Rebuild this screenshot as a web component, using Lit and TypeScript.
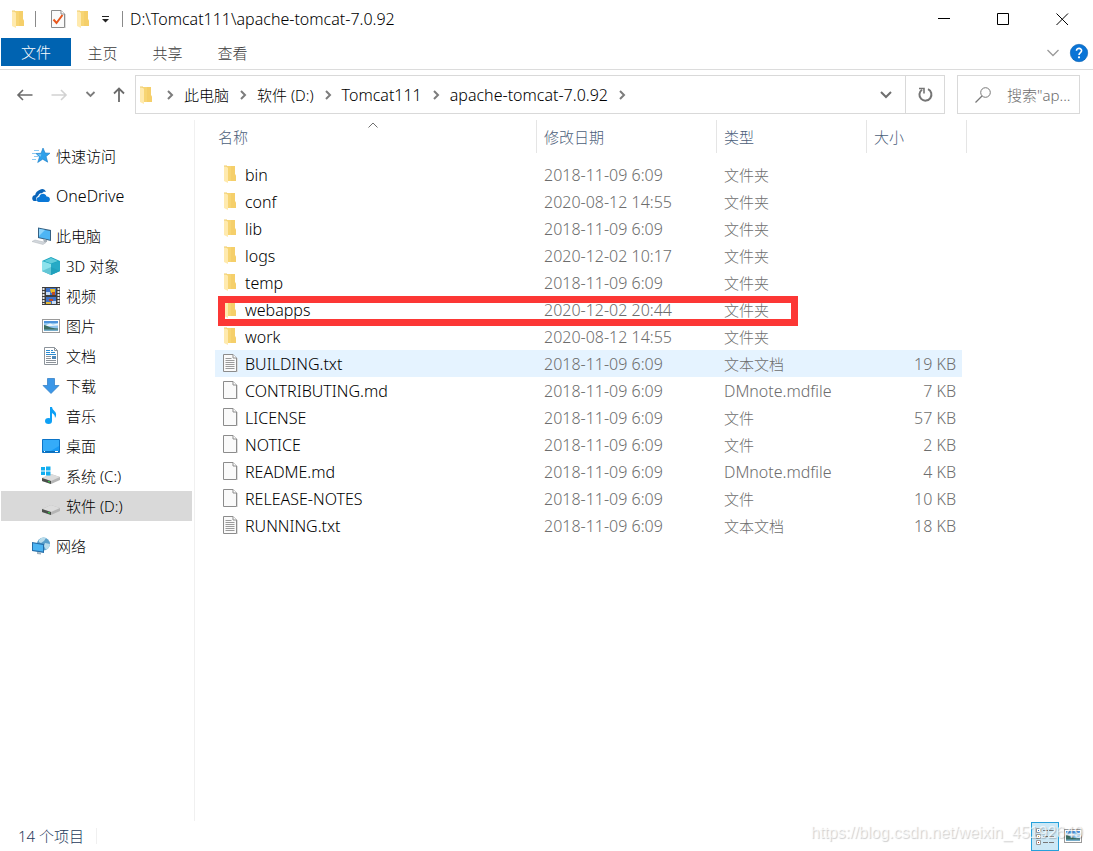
import { LitElement, html, css, svg, nothing } from "lit";
import { customElement, state } from "lit/decorators.js";
import { classMap } from "lit/directives/class-map.js";

const folderShape = svg`
  <path d="M4 1h9v8l1 2v5H4z" fill="#f7d574"/>
  <path d="M9 1h4v8l1 2v5H9z" fill="#f4cc64" opacity=".6"/>
  <path d="M2 1h2l2 2v15l-4-2z" fill="#ffeaae"/>
  <path d="M2 1h3" stroke="#eecb6c"/>`;

const pageShape = svg`
  <path d="M1.500 .5H11l3.500 3.500v13.500h-13z" fill="#fafafa" stroke="#8c8c8c"/>
  <path d="M15.500 4v14" stroke="#dedede"/>
  <path d="M11 .5V4h3.500" fill="#fff" stroke="#8c8c8c"/>`;

const pictureShape = svg`
  <rect x=".5" y="2.500" width="17" height="13" fill="#fff" stroke="#9a9a9a"/>
  <path d="M2 4h14v10H2z" fill="#8fc5ef"/>
  <path d="M2 4h14v2H2z" fill="#4d94dc"/>
  <path d="M4 8l4-1.500 3 1 5-1v2l-14 1z" fill="#e9f5fc"/>
  <path d="M2 8c3 0 4 3 14 3.500V14H2z" fill="#3d6f63"/>
  <path d="M2 12.500h14V14H2z" fill="#78aecb"/>`;

const driveShape = svg`
  <path d="M0 12l9-4 9 3v3l-9 4-9-3z" fill="#b5b5b5"/>
  <path d="M0 12l9-4 9 3-9 4z" fill="#dcdcdc"/>
  <path d="M0 12l9 3v3l-9-3z" fill="#4b4f4b"/>
  <path d="M6 15l2 .6v1l-2-.6z" fill="#31d843"/>`;

const icons: Record<string, unknown> = {
  folder: folderShape,
  page: pageShape,
  text: svg`${pageShape}<path d="M3.500 4.500h6M3.500 6.500h9M3.500 8.500h9M3.500 10.500h9M3.500 12.500h9M3.500 14.500h9" stroke="#9b9b9b"/>`,
  properties: svg`${pageShape}<path d="M3.500 9.500l3 3.500 6-8" fill="none" stroke="#e8571d" stroke-width="2"/>`,
  star: svg`
    <path d="M11 1l2.200 5 4.800.2-3.900 3.300 1.600 5.700-5-3-5 3.300 1.800-5.600L4 6.500l5-.2z" fill="#2ea0ea" stroke="#167bc6" stroke-width=".6"/>
    <path d="M11 2.500L9.500 7 5.500 7.200l3 2.500z" fill="#79c8f8"/>
    <path d="M2 3.500h5M0 6.500h4M2 9.500h4M0 12.500h4" stroke="#8cc9f2"/>`,
  cloud: svg`
    <path d="M1 13.500C-.8 11 1 8 3.200 8 3.500 4.500 7 2.500 10 4l1.500 1.500C7 5.500 6.500 8 6.200 9 3.500 10 4 13 5 14H3c-1 0-1.500 0-2-.5z" fill="#0a64b8"/>
    <path d="M8 2.800c2-1.500 5-.8 6 2.200-2-.5-3.500 0-4.500 1.500C8 6 6.500 6.500 6 8 5 5.500 6 3.500 8 2.800z" fill="#0a64b8"/>
    <path d="M7 15c-3.500-.5-3-5 .2-5C8 6 13.500 5.500 14.500 9.500c4-.3 4.500 5 1.500 5.500z" fill="#0a78d7"/>`,
  computer: svg`
    <path d="M6 .5l13 2.500v11L6 11z" fill="#356083"/>
    <path d="M7 1.700l11 2.200v8.800L7 10.200z" fill="#4db5f5"/>
    <path d="M7 1.700l6 1.200L7 9z" fill="#8ed4fb"/>
    <path d="M11 12l4 1v2l-3 .5z" fill="#a7b0b8"/>
    <path d="M0 14.500l3-1.500 11 2.500-3 2z" fill="#d2d7dc" stroke="#aeb5ba" stroke-width=".5"/>`,
  cube: svg`
    <path d="M0 4l9-4 9 4v10l-9 4-9-4z" fill="#19a3bd"/>
    <path d="M0 4l9 3v11l-9-4z" fill="#8de2ec"/>
    <path d="M9 7l9-3v10l-9 4z" fill="#26aac6"/>
    <path d="M2 4l7-3 7 3-7 2.500z" fill="#62cddc"/>
    <path d="M0 14l9-4 9 4-9 4z" fill="#1693ad" opacity=".35"/>`,
  film: svg`
    <path d="M0 0h18v18H0z" fill="#3d3d3d"/>
    <path d="M1.500 1v16M16.500 1v16" stroke="#e8e8e8" stroke-width="2" stroke-dasharray="2 1"/>
    <path d="M4 1h10v7H4zM4 10h10v7H4z" fill="#3f73c8"/>
    <path d="M4 5h4v3H4zM10 14h4v3h-4z" fill="#c9ddf5"/>
    <path d="M8 2h5v4H9z" fill="#e7bc27"/>
    <path d="M10 5h3v3h-3zM7 12h4v2H7z" fill="#be4b25"/>
    <path d="M4 15h5v2H4z" fill="#e2b736"/>`,
  picture: pictureShape,
  document: svg`
    <path d="M2.500 .5h10l3 3v14h-13z" fill="#fff" stroke="#8d949b"/>
    <path d="M12.500 .5v3h3" fill="none" stroke="#8d949b"/>
    <path d="M4 3.500h4M4 5.500h4M9 3.500h2M9 5.500h4M4 7.500h10" stroke="#2d8bd0"/>
    <path d="M4 9.500h5M4 11.500h5M4 13.500h10M4 15.500h10" stroke="#8c9299"/>
    <path d="M10 9h4v3h-4z" fill="#4e88b8"/>`,
  download: svg`<path d="M5.500 1.500h7v7h4.500l-8 8-8-8h4.500z" fill="#3b97e8" stroke="#2a79c2" stroke-width=".7"/>`,
  music: svg`
    <path d="M8 0h2c.5 4 5 4 4 9l-1 2c0-4-2-4-3-5v8H8z" fill="#0ea0f5"/>
    <ellipse cx="6.500" cy="14" rx="3.500" ry="3" fill="#0ea0f5"/>`,
  desktop: svg`
    <path d="M.5 2.500h17v13H.5z" fill="#199bf5" stroke="#0c74c7"/>
    <path d="M17 3v6L7 15H1V3z" fill="#41b3fb" opacity=".7"/>
    <path d="M1 14.500h16" stroke="#0b6fb8"/>
    <path d="M2 14.500h1M13 14.500h3" stroke="#fff"/>`,
  system: svg`
    <g transform="translate(0 -1)">${driveShape}</g>
    <path d="M-1 0h4v3.500h-4zM4 -.5h4.500v4H4zM-1 4.500h4V8h-4zM4 4.500h4.500v4H4z" fill="#12aef0"/>`,
  drive: driveShape,
  network: svg`
    <circle cx="11.500" cy="7" r="6.500" fill="#5a9fca"/>
    <path d="M7 3c2-2.500 5-3 7-2l-2 3-3 2-2-1zM13 6l5 1c0 3-2 5-4 6l-2-4z" fill="#b9dceb"/>
    <path d="M0 5l12 2v9L0 14z" fill="#256ea9"/>
    <path d="M1 6.200l10 1.700v6.700L1 13z" fill="#4cb4f2"/>
    <path d="M5 15l4 .6v2l-4-.6z" fill="#9fb2bf"/>`,
};

const icon = (name: string) =>
  html`<svg class="icon" width="18" height="18" viewBox="0 0 18 18" aria-hidden="true">${icons[name]}</svg>`;

const chevronRight = html`<svg class="sep" width="8" height="10" viewBox="0 0 8 10" aria-hidden="true">
  <path d="M2 1l4 4-4 4" fill="none" stroke="#7c7c7c" stroke-width="2" />
</svg>`;

const isLatin = (text: string) => /^[\x20-\x7e]+$/.test(text);

interface Place { label: string; icon: string; level: number; }
interface Entry { name: string; icon: string; date: string; type: string; size: string; }

const crumbs = ["此电脑", "软件 (D:)", "Tomcat111", "apache-tomcat-7.0.92"];

const groups: Place[][] = [
  [{ label: "快速访问", icon: "star", level: 0 }],
  [{ label: "OneDrive", icon: "cloud", level: 0 }],
  [
    { label: "此电脑", icon: "computer", level: 0 },
    { label: "3D 对象", icon: "cube", level: 1 },
    { label: "视频", icon: "film", level: 1 },
    { label: "图片", icon: "picture", level: 1 },
    { label: "文档", icon: "document", level: 1 },
    { label: "下载", icon: "download", level: 1 },
    { label: "音乐", icon: "music", level: 1 },
    { label: "桌面", icon: "desktop", level: 1 },
    { label: "系统 (C:)", icon: "system", level: 1 },
    { label: "软件 (D:)", icon: "drive", level: 1 },
  ],
  [{ label: "网络", icon: "network", level: 0 }],
];

const entry = (name: string, iconName: string, date: string, type: string, size = ""): Entry =>
  ({ name, icon: iconName, date, type, size });

const entries: Entry[] = [
  entry("bin", "folder", "2018-11-09 6:09", "文件夹"),
  entry("conf", "folder", "2020-08-12 14:55", "文件夹"),
  entry("lib", "folder", "2018-11-09 6:09", "文件夹"),
  entry("logs", "folder", "2020-12-02 10:17", "文件夹"),
  entry("temp", "folder", "2018-11-09 6:09", "文件夹"),
  entry("webapps", "folder", "2020-12-02 20:44", "文件夹"),
  entry("work", "folder", "2020-08-12 14:55", "文件夹"),
  entry("BUILDING.txt", "text", "2018-11-09 6:09", "文本文档", "19 KB"),
  entry("CONTRIBUTING.md", "page", "2018-11-09 6:09", "DMnote.mdfile", "7 KB"),
  entry("LICENSE", "page", "2018-11-09 6:09", "文件", "57 KB"),
  entry("NOTICE", "page", "2018-11-09 6:09", "文件", "2 KB"),
  entry("README.md", "page", "2018-11-09 6:09", "DMnote.mdfile", "4 KB"),
  entry("RELEASE-NOTES", "page", "2018-11-09 6:09", "文件", "10 KB"),
  entry("RUNNING.txt", "text", "2018-11-09 6:09", "文本文档", "18 KB"),
];

@customElement("app-root")
export class AppRoot extends LitElement {
  @state() private place = "软件 (D:)";
  @state() private active = "BUILDING.txt";

  static styles = css`
    :host {
      display: flex;
      flex-direction: column;
      position: relative;
      min-height: 100vh;
      box-sizing: border-box;
      background: #fff;
      color: #000;
      font: 300 15px/20px "Noto Sans", "Noto Sans CJK SC", sans-serif;
    }
    *, *::before, *::after { box-sizing: border-box; }
    button, input {
      font: inherit;
      color: inherit;
      background: none;
      border: 0;
      padding: 0;
      margin: 0;
    }
    svg { display: block; flex: none; overflow: visible; }
    .latin { font-size: 16px; }

    .titlebar { display: flex; align-items: center; height: 38px; padding-left: 10px; }
    .quick { display: flex; align-items: center; }
    .rule { width: 1px; height: 16px; background: #8a8a8a; }
    .quick .first-rule { margin: 0 14px 0 7px; }
    .quick .more { padding: 0 12px 0 9px; }
    .quick .gap { margin-left: 7px; }
    .title { flex: 1; margin: 0; padding-left: 7px; font-weight: 300; }
    .caption { display: flex; padding-right: 1px; }
    .caption button { width: 59px; height: 38px; display: grid; place-items: center; }

    .ribbon { display: flex; align-items: center; height: 32px; padding: 0 0 2px 1px; border-bottom: 1px solid #dcdcdc; color: #3b3b3b; }
    .tab { width: 65px; height: 28px; padding: 1px 2px 0 0; align-self: flex-start; }
    .tab.file { width: 70px; padding: 0; background: #0063b1; color: #fff; }
    .ribbon .spacer { flex: 1; }
    .ribbon .help { margin: 0 5px 0 11px; }

    .nav { display: flex; align-items: center; gap: 10px; padding: 5px 13px 6px 17px; }
    .arrows { display: flex; align-items: center; width: 108px; justify-content: space-between; }
    .address { flex: 1; display: flex; align-items: center; height: 39px; margin-right: 2px; border: 1px solid #d9d9d9; min-width: 0; }
    .crumbs { flex: 1; display: flex; align-items: center; padding-left: 2px; min-width: 0; }
    .crumbs .sep { margin: 0 10px; }
    .reload { width: 39px; height: 37px; border-left: 1px solid #d9d9d9; display: grid; place-items: center; }
    .drop { width: 38px; height: 37px; display: grid; place-items: center; }
    .search { display: flex; align-items: center; gap: 16px; width: 123px; height: 39px; padding-left: 17px; border: 1px solid #d9d9d9; color: #6d6d6d; }
    .search input { width: 72px; min-width: 0; outline: 0; }
    .search input::placeholder { color: #6d6d6d; opacity: 1; }

    .body { display: flex; flex: 1; }
    .side { width: 195px; padding: 21px 2px 0 1px; border-right: 1px solid #f0f0f0; display: flex; flex-direction: column; gap: 10px; }
    .group { display: flex; flex-direction: column; }
    .place { display: flex; align-items: center; gap: 6px; height: 30px; padding-left: 31px; text-align: left; }
    .place.child { padding-left: 41px; }
    .place.on { background: #d9d9d9; }

    .files { flex: 1; padding-left: 20px; }
    table { border-collapse: separate; border-spacing: 0; table-layout: fixed; width: 752px; }
    .c-name { width: 322px; }
    .c-date { width: 180px; }
    .c-type { width: 150px; }
    .c-size { width: 95px; }
    .c-end { width: 5px; }
    th { position: relative; height: 33px; padding: 1px 0 0 7px; text-align: left; font-weight: 300; color: #4c607a; border-right: 1px solid #e5e5e5; }
    th:first-child { padding-left: 3px; }
    .sort { position: absolute; inset: 2px 6px auto 0; display: flex; justify-content: center; }
    .space td { height: 8px; }
    td { height: 27px; padding: 0 0 0 7px; color: #6d6d6d; white-space: nowrap; }
    td.name { position: relative; color: #000; }
    td.size { padding: 0 6px 0 0; text-align: right; }
    td.end { padding: 0; }
    .label { display: flex; align-items: center; gap: 5px; }
    .label .icon { margin-bottom: 2px; }
    tr.on td:not(.end) { background: #e5f3ff; }
    .mark { position: absolute; left: 3px; top: 0; width: 580px; height: 30px; border: 7px solid #fc3735; z-index: 1; pointer-events: none; }

    .status { display: flex; align-items: center; height: 30px; padding: 0 11px 0 18px; color: #1e395b; }
    .status .count { padding-right: 12px; border-right: 1px solid #f0f0f0; line-height: 16px; }
    .views { display: flex; align-items: center; gap: 5px; margin-left: auto; }
    .views button { display: grid; place-items: center; }
    .views .details { width: 28px; height: 29px; background: #cce8f6; border: 1px solid #26a0da; }
    .watermark { position: absolute; right: 10px; bottom: 8px; font: 16px/20px "Liberation Sans", sans-serif; color: rgba(255, 255, 255, 0.7); text-shadow: 1px 1px 1px rgba(0, 0, 0, 0.2); pointer-events: none; }
  `;

  private renderTitle() {
    return html`<header class="titlebar">
      <div class="quick">
        ${icon("folder")}
        <span class="rule first-rule"></span>
        ${icon("properties")}
        <span class="gap">${icon("folder")}</span>
        <button class="more" aria-label="自定义快速访问工具栏">
          <svg width="8" height="7" viewBox="0 0 8 7"><path d="M0 .5h7" stroke="#222" /><path d="M0 3h7L3.500 6.500z" fill="#222" /></svg>
        </button>
        <span class="rule"></span>
      </div>
      <h1 class="title latin">D:\\Tomcat111\\apache-tomcat-7.0.92</h1>
      <div class="caption">
        <button aria-label="最小化"><svg width="13" height="13" viewBox="0 0 13 13"><path d="M0 5.500h12" stroke="#000" /></svg></button>
        <button aria-label="最大化"><svg width="13" height="13" viewBox="0 0 13 13"><path d="M.5 .5h11v11H.5z" fill="none" stroke="#000" /></svg></button>
        <button aria-label="关闭"><svg width="13" height="13" viewBox="0 0 13 13"><path d="M.5 .5l11.500 11.500M12 .5L.5 12" stroke="#000" /></svg></button>
      </div>
    </header>`;
  }

  private renderRibbon() {
    return html`<div class="ribbon">
      <button class="tab file">文件</button>
      ${["主页", "共享", "查看"].map((t) => html`<button class="tab">${t}</button>`)}
      <span class="spacer"></span>
      <button aria-label="展开功能区"><svg width="12" height="8" viewBox="0 0 12 8"><path d="M.5 1l5.500 5.500L11.500 1" fill="none" stroke="#9a9a9a" stroke-width="1.300" /></svg></button>
      <button class="help" aria-label="帮助">
        <svg width="18" height="18" viewBox="0 0 18 18">
          <circle cx="9" cy="9" r="8.700" fill="#0a74d6" stroke="#0a5fae" stroke-width=".6" />
          <path d="M6.500 6.800C6.500 3.500 11.800 3.700 11.600 6.800 11.500 8.600 9 8.700 9 11" fill="none" stroke="#fff" stroke-width="1.600" />
          <circle cx="9" cy="13.300" r="1.100" fill="#fff" />
        </svg>
      </button>
    </div>`;
  }

  private renderNav() {
    return html`<nav class="nav">
      <div class="arrows">
        <button aria-label="后退"><svg width="16" height="12" viewBox="0 0 16 12"><path d="M15.500 6H1.500M6 1L1 6l5 5" fill="none" stroke="#6b6b6b" stroke-width="1.600" /></svg></button>
        <button aria-label="前进"><svg width="16" height="12" viewBox="0 0 16 12"><path d="M.5 6h14M10 1l5 5-5 5" fill="none" stroke="#d2d2d2" stroke-width="1.600" /></svg></button>
        <button aria-label="最近浏览的位置"><svg width="9" height="7" viewBox="0 0 9 7"><path d="M.5 1l4 4 4-4" fill="none" stroke="#7c7c7c" stroke-width="1.800" /></svg></button>
        <button aria-label="上移"><svg width="12" height="15" viewBox="0 0 12 15"><path d="M6 15V1.500M1 6.500l5-5 5 5" fill="none" stroke="#6b6b6b" stroke-width="1.800" /></svg></button>
      </div>
      <div class="address">
        <div class="crumbs">
          ${icon("folder")}
          ${crumbs.map((c) => html`${chevronRight}<button class=${classMap({ latin: isLatin(c) })}>${c}</button>`)}
          ${chevronRight}
        </div>
        <button class="drop" aria-label="以前的位置"><svg width="12" height="8" viewBox="0 0 12 8"><path d="M1 1l5 5 5-5" fill="none" stroke="#6f6f6f" stroke-width="2" /></svg></button>
        <button class="reload" aria-label="刷新">
          <svg width="15" height="15" viewBox="0 0 15 15"><path d="M10 2.200a6 6 0 1 1-6 .5" fill="none" stroke="#757575" stroke-width="2" /><path d="M1 1.500h5v5" fill="none" stroke="#757575" stroke-width="1.600" /></svg>
        </button>
      </div>
      <label class="search">
        <svg width="16" height="16" viewBox="0 0 16 16" aria-hidden="true"><circle cx="10.500" cy="5.500" r="4.800" fill="none" stroke="#777" /><path d="M7 9L.5 15.500" stroke="#777" stroke-width="1.200" /></svg>
        <input type="text" aria-label="搜索" placeholder='搜索"ap...' />
      </label>
    </nav>`;
  }

  private renderSide() {
    return html`<aside class="side">
      ${groups.map((g) => html`<div class="group">
        ${g.map((p) => html`<button
          class=${classMap({ place: true, latin: isLatin(p.label), child: p.level === 1, on: p.label === this.place })}
          @click=${() => (this.place = p.label)}
        >${icon(p.icon)}<span>${p.label}</span></button>`)}
      </div>`)}
    </aside>`;
  }

  private renderFiles() {
    return html`<main class="files">
      <table>
        <colgroup><col class="c-name" /><col class="c-date" /><col class="c-type" /><col class="c-size" /><col class="c-end" /></colgroup>
        <thead>
          <tr>
            <th>名称<span class="sort"><svg width="10" height="6" viewBox="0 0 10 6"><path d="M.5 5.500L5 1l4.500 4.500" fill="none" stroke="#6f6f6f" /></svg></span></th>
            <th>修改日期</th>
            <th>类型</th>
            <th colspan="2">大小</th>
          </tr>
        </thead>
        <tbody>
          <tr class="space"><td colspan="5"></td></tr>
          ${entries.map((e) => html`<tr class=${classMap({ on: e.name === this.active })} @click=${() => (this.active = e.name)}>
            <td class="name latin">
              <div class="label">${icon(e.icon)}<span>${e.name}</span></div>
              ${e.name === "webapps" ? html`<span class="mark"></span>` : nothing}
            </td>
            <td class="latin">${e.date}</td>
            <td class=${classMap({ latin: isLatin(e.type) })}>${e.type}</td>
            <td class="size latin">${e.size}</td>
            <td class="end"></td>
          </tr>`)}
        </tbody>
      </table>
    </main>`;
  }

  render() {
    return html`
      ${this.renderTitle()} ${this.renderRibbon()} ${this.renderNav()}
      <div class="body">${this.renderSide()} ${this.renderFiles()}</div>
      <footer class="status">
        <span class="count">${entries.length} 个项目</span>
        <div class="views">
          <button class="details" aria-label="详细信息">
            <svg width="18" height="17" viewBox="0 0 18 17">
              <path d="M.5 .5h4v4h-4zM.5 6.500h4v4h-4zM.5 12.500h4v4h-4z" fill="#fff" stroke="#999" />
              <path d="M2 2h1v1H2z" fill="#2b76c2" /><path d="M2 8h1v1H2z" fill="#d19b30" /><path d="M2 14h1v1H2z" fill="#b63c20" />
              <path d="M7 2.500h5M13 2.500h5M7 8.500h5M13 8.500h5M7 14.500h5M13 14.500h5" stroke="#777" />
            </svg>
          </button>
          <button aria-label="大图标">${icon("picture")}</button>
        </div>
      </footer>
      <div class="watermark">https://blog.csdn.net/weixin_45192649</div>
    `;
  }
}
